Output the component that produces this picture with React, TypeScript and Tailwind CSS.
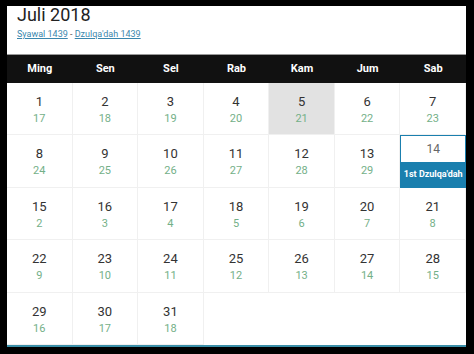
import React from "react";

const days = [
  [1, 17], [2, 18], [3, 19], [4, 20], [5, 21], [6, 22], [7, 23],
  [8, 24], [9, 25], [10, 26], [11, 27], [12, 28], [13, 29], [14, 0],
  [15, 2], [16, 3], [17, 4], [18, 5], [19, 6], [20, 7], [21, 8],
  [22, 9], [23, 10], [24, 11], [25, 12], [26, 13], [27, 14], [28, 15],
  [29, 16], [30, 17], [31, 18],
];

const heads = ["Ming", "Sen", "Sel", "Rab", "Kam", "Jum", "Sab"];

export default function App() {
  const cells: (number[] | null)[] = [...days];
  while (cells.length < 35) cells.push(null);
  return (
    <div className="w-[474px] h-[354px] bg-black pt-[6px] pl-[7px] pr-[8px] font-['Roboto',sans-serif]">
      <div className="bg-white h-[341px] flex flex-col border-b-2 border-[#3a8fa8]">
        <div className="h-[48px] pl-[10px] pt-0">
          <div className="text-[18px] leading-[18px] text-[#222]">Juli 2018</div>
          <div className="text-[9px] leading-[11px] mt-[5px] text-[#3a87ad]">
            <span className="underline">Syawal 1439</span>
            <span className="text-[#555]"> - </span>
            <span className="underline">Dzulqa'dah 1439</span>
          </div>
        </div>
        <div className="h-[29px] bg-[#111] grid grid-cols-7 items-center border-t border-[#999]">
          {heads.map((h) => (
            <div key={h} className="text-center text-white font-bold text-[11px]">
              {h}
            </div>
          ))}
        </div>
        <div className="grid grid-cols-7 grid-rows-5 flex-1">
          {cells.map((c, i) => {
            if (!c) return <div key={i} />;
            const [d, h] = c;
            if (d === 14) {
              return (
                <div key={i} className="border border-[#1a7fae] flex flex-col">
                  <div className="h-[26px] flex items-center justify-center text-[12px] text-[#666]">14</div>
                  <div className="flex-1 bg-[#1a7fae] flex items-center justify-center text-white font-bold text-[9px]">
                    1st Dzulqa'dah
                  </div>
                </div>
              );
            }
            return (
              <div
                key={i}
                className={`border-r border-b border-[#f0f0f0] flex flex-col items-center pt-[11px] ${d === 5 ? "bg-[#e2e2e2]" : ""}`}
              >
                <div className="text-[13px] leading-[16px] text-[#333]">{d}</div>
                <div className="text-[11px] leading-[14px] mt-[2px] text-[#74b088]">{h}</div>
              </div>
            );
          })}
        </div>
      </div>
    </div>
  );
}
